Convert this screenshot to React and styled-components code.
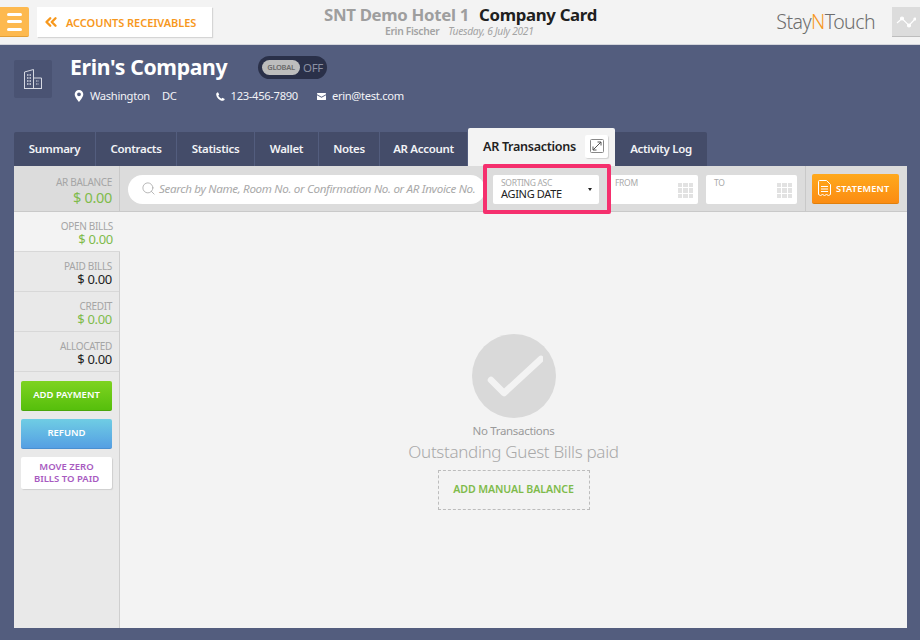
import React from 'react'
import styled, { createGlobalStyle } from 'styled-components'
import { Search, ChevronsLeft } from 'lucide-react'

const Global = createGlobalStyle`
  * { box-sizing: border-box; }
  html, body { margin: 0; height: 100%; }
  body {
    background: #535d7e;
    font-family: "Noto Sans", Lato, sans-serif;
    letter-spacing: -0.02em;
    overflow: hidden;
  }
`

const Page = styled.div`
  width: 920px;
  height: 640px;
  display: flex;
  flex-direction: column;
`

const Header = styled.header`
  height: 45px;
  flex: none;
  background: #f3f3f3;
  border-bottom: 1px solid #d4d6dc;
  display: flex;
  align-items: center;
  position: relative;
`
const MenuButton = styled.button`
  width: 29px;
  height: 30px;
  border: none;
  padding: 0 7px;
  background: #fdb94f;
  border-bottom: 1px solid #e39f36;
  border-radius: 0 2px 2px 0;
  display: flex;
  flex-direction: column;
  justify-content: center;
  gap: 4.5px;
  span {
    display: block;
    height: 3px;
    border-radius: 2px;
    background: #fff;
  }
`
const BackButton = styled.button`
  width: 175px;
  height: 30px;
  margin-left: 8px;
  border: none;
  padding: 0 0 0 5px;
  background: #fff;
  box-shadow: 1px 1px 1px #d5d5d5;
  color: #f7981d;
  font: 600 11px "Noto Sans", sans-serif;
  letter-spacing: -0.05px;
  display: flex;
  align-items: center;
  gap: 6px;
  white-space: nowrap;
`
const TitleBlock = styled.div`
  position: absolute;
  left: 324px;
  top: 4px;
  width: 273px;
`
const Titles = styled.div`
  display: flex;
  justify-content: space-between;
  font-size: 16.8px;
  line-height: 22px;
  font-weight: 700;
  white-space: nowrap;
`
const HotelName = styled.span`color: #9e9e9e;`
const PageName = styled.span`color: #202020;`
const SubTitle = styled.div`
  margin-top: -1px;
  padding-left: 61px;
  font-size: 10.3px;
  line-height: 12px;
  color: #a3a3a3;
  white-space: nowrap;
  b { font-weight: 600; margin-right: 9px; }
  i { font-weight: 400; }
`
const Logo = styled.div`
  margin-left: auto;
  margin-right: 17px;
  font: 300 19.5px/24px "Noto Sans", sans-serif;
  letter-spacing: -0.55px;
  color: #6d6d6d;
  span { color: #f7981d; }
`
const PulseButton = styled.div`
  width: 28px;
  height: 30px;
  background: #dcdcdc;
  border-bottom: 1px solid #bdbdbd;
  display: flex;
  align-items: center;
  justify-content: center;
`

const Company = styled.section`
  height: 83px;
  flex: none;
  padding: 15px 0 0 14px;
  display: flex;
  gap: 19px;
`
const CompanyIcon = styled.div`
  width: 38px;
  height: 38px;
  background: #4a5373;
  border-radius: 2px;
  display: flex;
  align-items: center;
  justify-content: center;
`
const CompanyInfo = styled.div`
  display: flex;
  flex-direction: column;
`
const NameRow = styled.div`
  display: flex;
  align-items: center;
  height: 24px;
  margin-top: -5px;
`
const CompanyName = styled.h1`
  margin: -2px 0 0 -1px;
  width: 188px;
  font-size: 21.2px;
  font-weight: 700;
  color: #fff;
  white-space: nowrap;
`
const Toggle = styled.div`
  width: 69px;
  height: 23px;
  padding: 4px;
  border-radius: 12px;
  background: #2a3049;
  display: flex;
  align-items: center;
  gap: 3px;
  font-size: 11.5px;
  color: #8a8fa2;
`
const ToggleKnob = styled.span`
  width: 38px;
  height: 15px;
  border-radius: 8px;
  background: #bdbdbd;
  color: #6a6a6a;
  font-size: 7.5px;
  font-weight: 600;
  display: flex;
  align-items: center;
  justify-content: center;
`
const ContactRow = styled.div`
  margin-top: 9px;
  padding-left: 3px;
  display: flex;
  align-items: center;
  font-size: 11.2px;
  line-height: 16px;
  color: #f2f3f6;
  white-space: nowrap;
`
const ContactItem = styled.span`
  display: flex;
  align-items: center;
  gap: ${p => p.$gap || 6}px;
  margin-right: ${p => p.$after || 0}px;
`

const Tabs = styled.nav`
  height: 38px;
  flex: none;
  margin-left: 14px;
  display: flex;
  align-items: flex-end;
`
const Tab = styled.div`
  width: ${p => p.$w}px;
  height: 34px;
  margin-right: 1px;
  padding-bottom: 2px;
  background: #444c69;
  color: #f2f3f6;
  font-size: 11.5px;
  font-weight: 600;
  display: flex;
  align-items: center;
  justify-content: center;
  white-space: nowrap;
  &:first-child { border-top-left-radius: 2px; }
  &:last-child { border-top-right-radius: 2px; }
`
const ActiveTab = styled.div`
  width: 147px;
  height: 38px;
  margin-right: 0;
  padding: 0 7px 2px 15px;
  background: #f3f3f3;
  border-radius: 2px 2px 0 0;
  color: #222;
  font-size: 12.6px;
  font-weight: 600;
  display: flex;
  align-items: center;
  justify-content: space-between;
  white-space: nowrap;
`
const ExpandBox = styled.span`
  width: 23px;
  height: 23px;
  background: #fff;
  border-radius: 2px;
  box-shadow: 1px 1px 1px #d0d0d0;
  display: flex;
  align-items: center;
  justify-content: center;
`

const Panel = styled.main`
  width: 893px;
  height: 462px;
  margin-left: 14px;
  background: #f3f3f3;
  display: flex;
  flex-direction: column;
`
const Toolbar = styled.div`
  height: 46px;
  flex: none;
  background: #dcdcdc;
  border-bottom: 1px solid #c9c9c9;
  display: flex;
  align-items: center;
`
const Balance = styled.div`
  width: 106px;
  height: 100%;
  padding: 10px 7px 0 0;
  border-right: 1px solid #c9c9c9;
  text-align: right;
`
const StatLabel = styled.div`
  font-size: 10px;
  line-height: 12px;
  color: #a5a5a5;
`
const StatValue = styled.div`
  font-size: ${p => p.$big ? 14.5 : 13}px;
  line-height: ${p => p.$big ? 15 : 14}px;
  margin-top: ${p => p.$big ? 2 : 0}px;
  color: ${p => p.$green ? '#7fbb4b' : '#222'};
`
const SearchBox = styled.div`
  width: 357px;
  height: 29px;
  margin: 1px 0 0 8px;
  padding: 0 0 2px 13px;
  border-radius: 15px;
  background: #fff;
  color: #a9a9a9;
  font-size: 11.6px;
  font-style: italic;
  display: flex;
  align-items: center;
  gap: 3px;
  white-space: nowrap;
  overflow: hidden;
`
const SortWrap = styled.div`
  position: relative;
  margin: 1px 0 0 8px;
`
const SortSelect = styled.div`
  width: 106px;
  height: 29px;
  padding: 3px 8px;
  background: #fff;
  border-radius: 2px;
  position: relative;
`
const FieldLabel = styled.div`
  font-size: 8.5px;
  line-height: 10px;
  color: #a9a9a9;
`
const SortValue = styled.div`
  font-size: 11px;
  line-height: 11px;
  color: #222;
`
const Caret = styled.span`
  position: absolute;
  right: 7px;
  top: 13px;
  border-left: 2.5px solid transparent;
  border-right: 2.5px solid transparent;
  border-top: 3px solid #222;
`
const Highlight = styled.div`
  position: absolute;
  left: -10px;
  top: -11px;
  width: 128px;
  height: 50px;
  border: 4px solid #f5306e;
  border-radius: 2px;
  z-index: 2;
`
const DateField = styled.div`
  width: ${p => p.$w}px;
  height: 29px;
  margin: 1px 0 0 8px;
  padding: 3px 8px;
  background: #fff;
  border-radius: 2px;
  display: flex;
  justify-content: space-between;
`
const DateGrid = styled.span`
  margin-top: 5px;
  margin-right: -3px;
  display: grid;
  grid-template-columns: repeat(3, 4.5px);
  grid-auto-rows: 4.5px;
  gap: 1px;
  i { background: #e2e2e2; }
`
const ActionArea = styled.div`
  height: 100%;
  margin-left: 8px;
  padding-left: 6px;
  border-left: 1px solid #c9c9c9;
  display: flex;
  align-items: center;
`
const StatementButton = styled.button`
  width: 87px;
  height: 30px;
  border: none;
  border-bottom: 1px solid #e07f0c;
  border-radius: 2px;
  padding: 0 0 0 6px;
  background: linear-gradient(#ffa91c, #fb8c12);
  color: #fff;
  font: 600 9.2px "Noto Sans", sans-serif;
  letter-spacing: 0.2px;
  display: flex;
  align-items: center;
  gap: 5px;
`

const Body = styled.div`
  flex: 1;
  display: flex;
  min-height: 0;
`
const Sidebar = styled.aside`
  width: 106px;
  background: #e9e9e9;
  border-right: 1px solid #cfcfcf;
  display: flex;
  flex-direction: column;
`
const StatRow = styled.div`
  height: 40px;
  padding: 8px 7px 0 0;
  text-align: right;
  background: ${p => p.$active ? '#f3f3f3' : '#e9e9e9'};
  margin-right: ${p => p.$active ? -1 : 0}px;
  border-bottom: 1px solid #d8d8d8;
`
const SideActions = styled.div`
  padding: 9px 7px 0;
  display: flex;
  flex-direction: column;
  gap: 8px;
`
const SideButton = styled.button`
  height: 30px;
  width: 91px;
  border: none;
  border-radius: 2px;
  padding: 0 0 1px;
  font: 600 9.5px/12px "Noto Sans", sans-serif;
  color: #fff;
  background: ${p => p.$bg};
  border-bottom: 1px solid ${p => p.$edge};
`
const WhiteButton = styled(SideButton)`
  height: 32px;
  background: #fff;
  color: #a85abf;
  border: none;
  box-shadow: 1px 1px 1px #cfcfcf;
`
const Empty = styled.div`
  flex: 1;
  padding-top: 122px;
  display: flex;
  flex-direction: column;
  align-items: center;
`
const CheckCircle = styled.div`
  width: 84px;
  height: 84px;
  border-radius: 50%;
  background: #d9d9d9;
  display: flex;
  align-items: center;
  justify-content: center;
`
const EmptyLabel = styled.div`
  margin-top: 5px;
  font-size: 11.5px;
  line-height: 16px;
  color: #9a9a9a;
`
const EmptyTitle = styled.div`
  font-size: 17px;
  font-weight: 300;
  line-height: 25px;
  color: #a9a9a9;
`
const ManualButton = styled.button`
  width: 152px;
  height: 40px;
  margin-top: 6px;
  padding: 0 0 2px;
  border: 1px dashed #bcbcbc;
  background: transparent;
  color: #7fbb4b;
  font: 600 10.6px "Noto Sans", sans-serif;
  letter-spacing: -0.1px;
`

const PinIcon = () => (
  <svg width="10" height="12" viewBox="0 0 10 12">
    <path fillRule="evenodd" fill="#fff" d="M5 0a4.3 4.3 0 0 0-4.3 4.3C.7 7.3 5 12 5 12s4.3-4.7 4.3-7.700A4.3 4.3 0 0 0 5 0zm0 6.200a1.900 1.900 0 1 1 0-3.800 1.900 1.900 0 0 1 0 3.800z" />
  </svg>
)
const PhoneIcon = () => (
  <svg width="9" height="9" viewBox="0 0 10 10">
    <path fill="#fff" d="M2.200.3 3.600 2.800 2.600 3.900C3 5.300 4.400 6.800 6 7.400L7.100 6.400 9.700 7.900C9.500 9 8.700 9.800 7.600 9.800 3.700 9.500.5 6.300.2 2.400.2 1.300 1.100.5 2.200.3z" />
  </svg>
)
const MailIcon = () => (
  <svg width="9" height="7" viewBox="0 0 9 7">
    <path fill="#fff" d="M0 1.200V.6C0 .3.300 0 .6 0h7.800c.3 0 .6.300.6.600v.6L4.500 3.700zM0 2.200l4.500 2.500L9 2.200v4.200c0 .3-.3.600-.6.600H.6C.3 7 0 6.700 0 6.400z" />
  </svg>
)
const BuildingIcon = () => (
  <svg width="18" height="20" viewBox="0 0 18 20" fill="none" stroke="#d5d8e2" strokeWidth="1">
    <path d="M.5 19.500V3L9.500.5v19M9.500 9h8v10.500M0 19.500h18" />
    <path d="M3 6h4M3 9h4M3 12h4M3 15h4" strokeWidth="1.600" strokeDasharray="1.500 1" />
    <path d="M12 12h3M12 15h3" strokeDasharray="1.500 1" />
  </svg>
)
const PulseIcon = () => (
  <svg width="20" height="12" viewBox="0 0 20 12" fill="#fff" stroke="#fff" strokeWidth="1.200">
    <path d="M1 7 6 2.500 13 9.500 19 3" fill="none" />
    <circle cx="6" cy="2.500" r="1.500" />
    <circle cx="13" cy="9.500" r="1.500" />
    <circle cx="19" cy="3" r="1" />
  </svg>
)
const ReceiptIcon = () => (
  <svg width="13" height="16" viewBox="0 0 13 16" fill="none" stroke="#fff" strokeWidth="1">
    <path d="M1.500.5H8.500L12.500 4.500V14.500L10.500 15.500 8.500 14.500 6.500 15.500 4.500 14.500 2.500 15.500.5 14.500V1.500A1 1 0 0 1 1.500.5z" />
    <path d="M3 6.500h7M3 9h7M3 11.500h7" />
  </svg>
)
const ExpandIcon = () => (
  <svg width="14" height="14" viewBox="0 0 14 14" fill="none" stroke="#555" strokeWidth="1">
    <rect x=".5" y=".5" width="13" height="13" rx="1" stroke="#888" />
    <path d="M3 11 11 3M7.500 3H11V6.500M3 7.500V11H6.500" />
  </svg>
)

const tabs = [
  ['Summary', 81], ['Contracts', 80], ['Statistics', 77], ['Wallet', 63], ['Notes', 60], ['AR Account', 87],
]
const stats = [
  ['OPEN BILLS', true, true],
  ['PAID BILLS', false, false],
  ['CREDIT', true, false],
  ['ALLOCATED', false, false],
]

export default function App() {
  return (
    <Page>
      <Global />
      <Header>
        <MenuButton><span /><span /><span /></MenuButton>
        <BackButton>
          <ChevronsLeft size={18} strokeWidth={3.2} />
          ACCOUNTS RECEIVABLES
        </BackButton>
        <TitleBlock>
          <Titles>
            <HotelName>SNT Demo Hotel 1</HotelName>
            <PageName>Company Card</PageName>
          </Titles>
          <SubTitle><b>Erin Fischer</b><i>Tuesday, 6 July 2021</i></SubTitle>
        </TitleBlock>
        <Logo>Stay<span>N</span>Touch</Logo>
        <PulseButton><PulseIcon /></PulseButton>
      </Header>

      <Company>
        <CompanyIcon><BuildingIcon /></CompanyIcon>
        <CompanyInfo>
          <NameRow>
            <CompanyName>Erin's Company</CompanyName>
            <Toggle><ToggleKnob>GLOBAL</ToggleKnob>OFF</Toggle>
          </NameRow>
          <ContactRow>
            <ContactItem $after={12}><PinIcon />Washington</ContactItem>
            <ContactItem $after={39}>DC</ContactItem>
            <ContactItem $after={19}><PhoneIcon />123-456-7890</ContactItem>
            <ContactItem><MailIcon />erin@test.com</ContactItem>
          </ContactRow>
        </CompanyInfo>
      </Company>

      <Tabs>
        {tabs.map(([label, w]) => <Tab key={label} $w={w}>{label}</Tab>)}
        <ActiveTab>
          AR Transactions
          <ExpandBox><ExpandIcon /></ExpandBox>
        </ActiveTab>
        <Tab $w={92}>Activity Log</Tab>
      </Tabs>

      <Panel>
        <Toolbar>
          <Balance>
            <StatLabel>AR BALANCE</StatLabel>
            <StatValue $big $green>$ 0.00</StatValue>
          </Balance>
          <SearchBox>
            <Search size={15} strokeWidth={1.3} />
            Search by Name, Room No. or Confirmation No. or AR Invoice No.
          </SearchBox>
          <SortWrap>
            <Highlight />
            <SortSelect>
              <FieldLabel>SORTING ASC</FieldLabel>
              <SortValue>AGING DATE</SortValue>
              <Caret />
            </SortSelect>
          </SortWrap>
          <DateField $w={91}>
            <FieldLabel>FROM</FieldLabel>
            <DateGrid>{Array.from({ length: 9 }, (_, i) => <i key={i} />)}</DateGrid>
          </DateField>
          <DateField $w={91}>
            <FieldLabel>TO</FieldLabel>
            <DateGrid>{Array.from({ length: 9 }, (_, i) => <i key={i} />)}</DateGrid>
          </DateField>
          <ActionArea>
            <StatementButton><ReceiptIcon />STATEMENT</StatementButton>
          </ActionArea>
        </Toolbar>
        <Body>
          <Sidebar>
            {stats.map(([label, green, active]) => (
              <StatRow key={label} $active={active}>
                <StatLabel>{label}</StatLabel>
                <StatValue $green={green}>$ 0.00</StatValue>
              </StatRow>
            ))}
            <SideActions>
              <SideButton $bg="linear-gradient(#7ed321, #56bf0c)" $edge="#4aa50a">ADD PAYMENT</SideButton>
              <SideButton $bg="linear-gradient(#6fcde4, #559fe3)" $edge="#4a8fd0">REFUND</SideButton>
              <WhiteButton>MOVE ZERO<br />BILLS TO PAID</WhiteButton>
            </SideActions>
          </Sidebar>
          <Empty>
            <CheckCircle>
              <svg width="58" height="46" viewBox="0 0 58 46" fill="none">
                <path d="M6 27 19 40 56 6" stroke="#f3f3f3" strokeWidth="6.500" strokeLinecap="round" strokeLinejoin="round" />
              </svg>
            </CheckCircle>
            <EmptyLabel>No Transactions</EmptyLabel>
            <EmptyTitle>Outstanding Guest Bills paid</EmptyTitle>
            <ManualButton>ADD MANUAL BALANCE</ManualButton>
          </Empty>
        </Body>
      </Panel>
    </Page>
  )
}
